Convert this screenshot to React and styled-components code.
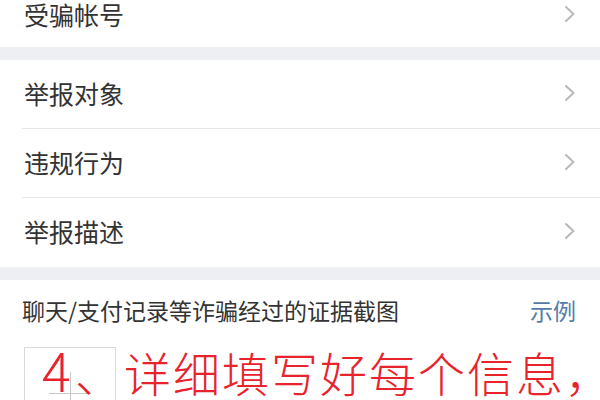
import styled, { createGlobalStyle } from "styled-components";

const GlobalStyle = createGlobalStyle`
  html, body {
    margin: 0;
    padding: 0;
    background: #ffffff;
  }
  body {
    font-family: "Noto Sans CJK SC", "Noto Sans", sans-serif;
    color: #333333;
    overflow: hidden;
  }
`;

const topRows = ["受骗帐号"];
const reportRows = ["举报对象", "违规行为", "举报描述"];

function Chevron() {
  return (
    <ChevronIcon viewBox="0 0 12 18" aria-hidden="true">
      <path d="M2 2 L9.5 9 L2 16" />
    </ChevronIcon>
  );
}

function Row({ label, cut, last }) {
  return (
    <RowItem $cut={cut} $last={last}>
      <Label>{label}</Label>
      <Chevron />
    </RowItem>
  );
}

export default function App() {
  return (
    <Page>
      <GlobalStyle />
      <Group>
        {topRows.map((label) => (
          <Row key={label} label={label} cut last />
        ))}
      </Group>
      <Gap />
      <Group>
        {reportRows.map((label, i) => (
          <Row key={label} label={label} last={i === reportRows.length - 1} />
        ))}
      </Group>
      <Gap />
      <Evidence>
        <EvidenceHead>
          <EvidenceTitle>聊天/支付记录等诈骗经过的证据截图</EvidenceTitle>
          <ExampleLink>示例</ExampleLink>
        </EvidenceHead>
        <UploadArea>
          <UploadBox>
            <Plus />
          </UploadBox>
          <Note>
            <Digit>4</Digit>、详细填写好每个信息，
          </Note>
        </UploadArea>
      </Evidence>
    </Page>
  );
}

const Page = styled.div`
  width: 600px;
  height: 400px;
  overflow: hidden;
  background: #ffffff;
`;

const Group = styled.div`
  background: #ffffff;
`;

const Gap = styled.div`
  height: 13px;
  background: #edeff3;
`;

const RowItem = styled.div`
  position: relative;
  height: ${(p) => (p.$cut ? "47px" : "69px")};
  box-sizing: border-box;
  padding: ${(p) => (p.$cut ? "0 24px 19px 24px" : "0 24px 3px 24px")};
  display: flex;
  align-items: center;
  justify-content: space-between;

  &::after {
    content: "";
    display: ${(p) => (p.$last ? "none" : "block")};
    position: absolute;
    left: 22px;
    right: 0;
    bottom: 0;
    height: 1px;
    background: #e6e7ea;
  }
`;

const Label = styled.span`
  font-size: 25px;
  line-height: 30px;
  color: #333333;
`;

const ChevronIcon = styled.svg`
  width: 12px;
  height: 18px;
  fill: none;
  stroke: #b8b8b8;
  stroke-width: 2;
  stroke-linecap: round;
  stroke-linejoin: round;
`;

const Evidence = styled.div`
  background: #ffffff;
  padding: 15px 24px 0 22px;
`;

const EvidenceHead = styled.div`
  display: flex;
  align-items: center;
  justify-content: space-between;
  height: 30px;
`;

const EvidenceTitle = styled.span`
  font-size: 23px;
  color: #333333;
`;

const ExampleLink = styled.span`
  font-size: 23px;
  color: #557ca8;
`;

const UploadArea = styled.div`
  position: relative;
  margin-top: 22px;
`;

const UploadBox = styled.div`
  width: 92px;
  height: 92px;
  margin-left: 2px;
  box-sizing: border-box;
  border: 1px solid #d8d9dc;
  display: flex;
  align-items: center;
  justify-content: center;
`;

const Plus = styled.div`
  position: relative;
  width: 42px;
  height: 42px;

  &::before,
  &::after {
    content: "";
    position: absolute;
    background: #c4c5c8;
  }
  &::before {
    left: 0;
    right: 0;
    top: 50%;
    height: 1px;
  }
  &::after {
    top: 0;
    bottom: 0;
    left: 50%;
    width: 1px;
  }
`;

const Note = styled.span`
  position: absolute;
  left: 20px;
  top: -6px;
  font-size: 47px;
  line-height: 56px;
  font-weight: 300;
  letter-spacing: 2px;
  color: #e8232b;
  white-space: nowrap;
`;

const Digit = styled.span`
  font-size: 54px;
  margin-right: 2px;
`;
